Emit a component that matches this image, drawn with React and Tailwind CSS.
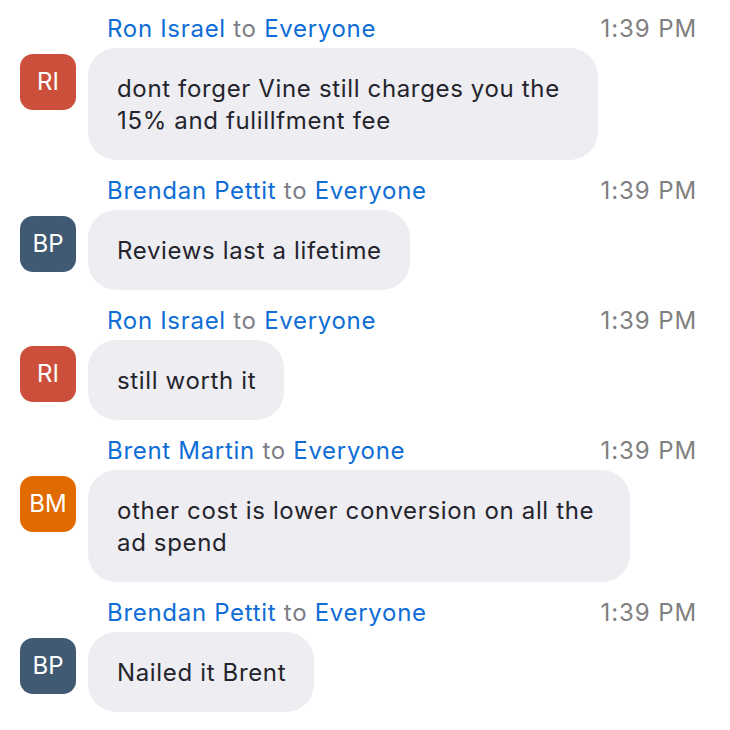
import React from "react";

const msgs = [
  { name: "Ron Israel", init: "RI", color: "bg-[#cc4f3b]", lines: ["dont forger Vine still charges you the", "15% and fulillfment fee"], w: "w-[510px]" },
  { name: "Brendan Pettit", init: "BP", color: "bg-[#3f5a72]", lines: ["Reviews last a lifetime"] },
  { name: "Ron Israel", init: "RI", color: "bg-[#cc4f3b]", lines: ["still worth it"] },
  { name: "Brent Martin", init: "BM", color: "bg-[#e06b00]", lines: ["other cost is lower conversion on all the", "ad spend"], w: "w-[542px]" },
  { name: "Brendan Pettit", init: "BP", color: "bg-[#3f5a72]", lines: ["Nailed it Brent"] },
];

export default function App() {
  return (
    <div className="w-[730px] h-[730px] bg-white pt-[13px] pl-[20px] pr-[33px] text-[24px] font-['Inter',sans-serif]">
      <div className="flex flex-col gap-[15px]">
        {msgs.map((m, i) => (
          <div key={i} className="flex flex-col">
            <div className="flex items-center justify-between pl-[87px] leading-[32px] tracking-[0.7px]">
              <div>
                <span className="text-[#0e6dd6]">{m.name}</span>
                <span className="text-[#7d7d85]"> to </span>
                <span className="text-[#0e6dd6]">Everyone</span>
              </div>
              <span className="text-[#808080] tracking-[0.9px]">1:39 PM</span>
            </div>
            <div className="flex items-start gap-[12px] mt-[3px]">
              <div className={`w-[56px] h-[56px] mt-[6px] rounded-[13px] ${m.color} text-white flex items-center justify-center text-[24px] shrink-0`}>
                {m.init}
              </div>
              <div className={`bg-[#eeedf2] rounded-[28px] pt-[25px] pb-[23px] pl-[29px] pr-[28px] text-[#24242d] leading-[32px] tracking-[0.65px] ${m.w || ""}`}>
                {m.lines.map((l, j) => (
                  <div key={j} className="whitespace-nowrap">{l}</div>
                ))}
              </div>
            </div>
          </div>
        ))}
      </div>
    </div>
  );
}
